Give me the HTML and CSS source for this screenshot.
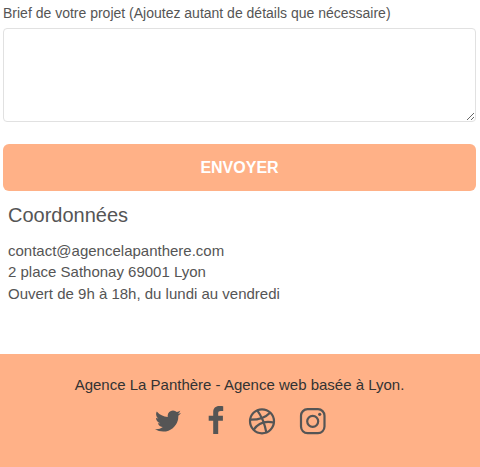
FILE: index.html
```html
<!DOCTYPE html>
<html lang="fr">
<head>
<meta charset="utf-8">
<title>Agence La Panthère</title>
<link rel="stylesheet" href="styles.css">
</head>
<body>
<form class="form">
  <label class="label" for="brief"><span>Brief de votre projet (Ajoutez autant de détails que nécessaire)</span></label>
  <textarea class="brief" id="brief"></textarea>
  <button class="send" type="button">ENVOYER</button>
</form>
<section class="contact">
  <h2 class="title"><span>Coordonnées</span></h2>
  <p class="line"><span>contact@agencelapanthere.com</span></p>
  <p class="line"><span>2 place Sathonay 69001 Lyon</span></p>
  <p class="line"><span>Ouvert de 9h à 18h, du lundi au vendredi</span></p>
</section>
<footer class="footer">
  <p class="tagline"><span>Agence La Panthère - Agence web basée à Lyon.</span></p>
  <div class="social">
    <svg class="icon" viewBox="0 0 30 30"><path transform="translate(.2 .2) scale(.0165)" d="M1684 408q-67 98-162 167 1 14 1 42 0 130-38 259.500t-115.500 248.500-184.500 210.500-258 146-323 54.500q-271 0-496-145 35 4 78 4 225 0 401-138-105-2-188-64.500t-114-159.500q33 5 61 5 43 0 85-11-112-23-185.500-111.500t-73.500-205.500v-4q68 38 146 41-66-44-105-115t-39-154q0-88 44-163 121 149 294.500 238.500t371.500 99.500q-8-38-8-74 0-134 94.500-228.500t228.500-94.500q140 0 236 102 109-21 205-78-37 115-142 178 93-10 186-50z"/></svg>
    <svg class="icon" viewBox="0 0 30 30"><path d="M22.200 .2v4.700h-2.500c-1.800 0-2.500.7-2.500 2.200v2.700h4.700v4.900h-4.700V28h-5V14.700H7.700V9.800h4.500V6.300C12.200 2.100 14.600 0 18.300 0c1.700 0 3 .1 3.900.2z"/></svg>
    <svg class="icon line-icon" viewBox="0 0 30 30"><g transform="translate(-2 0)"><circle cx="15" cy="15.300" r="12"/><path d="M10.200 4.300c4.100 5.300 7.300 12.300 9.100 22M3 13.700c8.500.2 15-1.700 20-7M6.600 23.900c4.500-7.200 11.400-9.400 20.400-7.400"/></g></svg>
    <svg class="icon line-icon" viewBox="0 0 30 30"><g transform="translate(1 0)"><rect x="3" y="3.200" width="23.500" height="23.900" rx="6.500"/><circle cx="14.700" cy="15.300" r="5.500"/><circle class="dot" cx="21.700" cy="8.300" r="1.600"/></g></svg>
  </div>
</footer>
</body>
</html>
```
FILE: styles.css
```css
* { box-sizing: border-box; }
body {
  margin: 0;
  height: 467px;
  overflow: hidden;
  display: flex;
  flex-direction: column;
  background: #fff;
  color: #555;
  font-family: "Liberation Sans", Arial, sans-serif;
}
.form { padding: 3px 4px 0 3px; }
.label { display: block; height: 25px; font-size: 14px; line-height: 21px; }
.brief {
  display: block;
  width: 100%;
  height: 94px;
  border: 1px solid #e1e1e1;
  border-radius: 4px;
  background: #fff;
}
.send {
  display: block;
  width: 100%;
  height: 47px;
  margin-top: 22px;
  padding: 0;
  border: 0;
  border-radius: 6px;
  background: #ffb187;
  color: #fff;
  font: bold 16px "Liberation Sans", Arial, sans-serif;
}
.contact { padding: 10px 8px 0; }
.title { margin: 0 0 10.800px; font-size: 20px; font-weight: 400; line-height: 28px; }
.line { margin: 0; font-size: 15px; line-height: 21.430px; }
.footer {
  height: 113px;
  margin-top: auto;
  padding-top: 20px;
  background: #ffb187;
  text-align: center;
}
.tagline { margin: 0; padding-right: 1px; color: #333; font-size: 15px; line-height: 22px; }
.social {
  display: flex;
  justify-content: center;
  gap: 17.700px;
  margin-top: 10px;
}
.icon { width: 30px; height: 30px; fill: #555; overflow: visible; }
.line-icon { fill: none; stroke: #555; stroke-width: 2.200; }
.dot { fill: #555; stroke: none; }
```
